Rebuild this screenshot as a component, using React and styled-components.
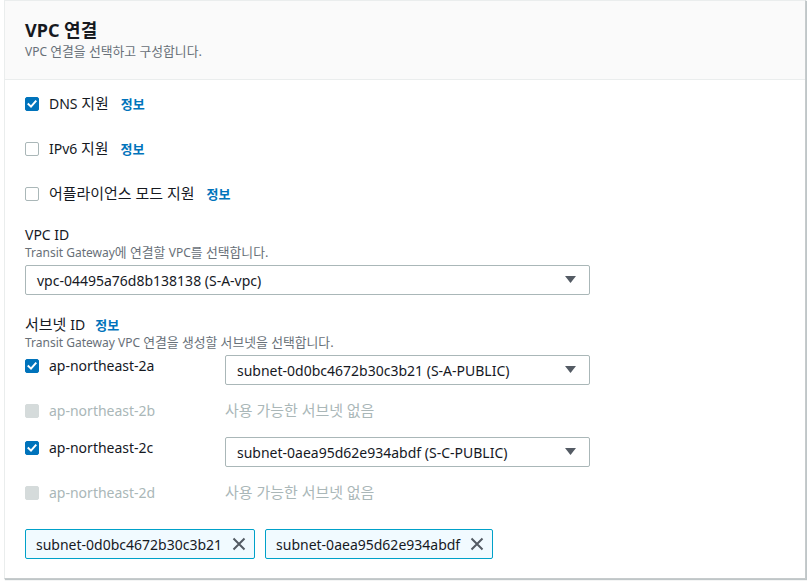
import React from "react";
import styled, { createGlobalStyle } from "styled-components";

const Global = createGlobalStyle`
  html, body { margin: 0; padding: 0; background: #ffffff; }
  body {
    font-family: "Noto Sans", "Noto Sans CJK KR", sans-serif;
    color: #16191f;
    font-size: 14px;
  }
  * { box-sizing: border-box; }
`;

const Page = styled.div`
  padding: 0 1px 2px 4px;
  width: 807px;
`;

const Card = styled.section`
  width: 802px;
  border: 1px solid #eaeded;
  border-right: 1px solid #c6cbcc;
  border-bottom: 1px solid #c6cbcc;
  box-shadow: 1px 1px 1px 0 rgba(0, 28, 36, 0.25);
  background: #fff;
`;

const Header = styled.header`
  background: #fafafa;
  border-bottom: 1px solid #eaeded;
  padding: 18px 20px 19px;
  display: flex;
  flex-direction: column;
`;

const Title = styled.h2`
  margin: 0;
  font-size: 18px;
  line-height: 22px;
  height: 22px;
  font-weight: 700;
  color: #16191f;
`;

const Subtitle = styled.div`
  margin-top: 3px;
  font-size: 12px;
  line-height: 16px;
  height: 16px;
  color: #687078;
`;

/* Hangul is set a touch larger, as the reference's Korean face runs wider */
const Ko = styled.span`
  font-size: 1.07em;
  line-height: 1;
`;

const Body = styled.div`
  padding: 13px 20px 19px;
  display: flex;
  flex-direction: column;
`;

const OptionList = styled.div`
  display: flex;
  flex-direction: column;
  gap: 23px;
`;

const CheckRow = styled.label`
  display: flex;
  align-items: center;
  height: 22px;
  gap: 10px;
  line-height: 22px;
  color: ${(p) => (p.$disabled ? "#aab7b8" : "#16191f")};
  font-size: 14px;
  white-space: nowrap;
`;

const Box = styled.span`
  width: 14px;
  height: 14px;
  flex: none;
  border-radius: 2px;
  display: inline-flex;
  align-items: center;
  justify-content: center;
  background: ${(p) => (p.$disabled ? "#d5dbdb" : p.$checked ? "#0073bb" : "#fff")};
  border: 1px solid
    ${(p) => (p.$disabled ? "#d5dbdb" : p.$checked ? "#0073bb" : "#aab7b8")};
`;

const Info = styled.a`
  margin-left: 2px;
  font-size: 13px;
  font-weight: 700;
  color: #0073bb;
  text-decoration: none;
`;

const Field = styled.div`
  margin-top: ${(p) => p.$top}px;
  display: flex;
  flex-direction: column;
`;

const FieldLabel = styled.div`
  font-size: 14px;
  line-height: 20px;
  height: 20px;
  color: #16191f;
  display: flex;
  align-items: center;
  gap: 8px;
`;

const Description = styled.div`
  font-size: 12px;
  line-height: 16px;
  height: 16px;
  color: #687078;
`;

const Select = styled.div`
  margin-top: ${(p) => p.$top || 0}px;
  width: ${(p) => p.$width}px;
  height: 30px;
  border: 1px solid #aab7b8;
  border-radius: 2px;
  display: flex;
  align-items: center;
  justify-content: space-between;
  padding: 0 13px 0 11px;
  font-size: 14px;
  color: #16191f;
  background: #fff;
`;

const SubnetList = styled.div`
  margin-top: 4px;
  display: flex;
  flex-direction: column;
  gap: 11px;
`;

const SubnetRow = styled.div`
  display: flex;
  align-items: flex-start;
  height: 30px;
`;

const AzCell = styled.div`
  width: 200px;
  flex: none;
  padding-top: ${(p) => (p.$disabled ? 4 : 0)}px;
`;

const Empty = styled.div`
  line-height: 30px;
  height: 30px;
  font-size: 14px;
  color: #aab7b8;
`;

const Tokens = styled.div`
  margin-top: 21px;
  display: flex;
  gap: 10px;
`;

const Token = styled.div`
  height: 30px;
  border: 1px solid #00a1c9;
  background: #f1faff;
  border-radius: 2px;
  display: flex;
  align-items: center;
  padding: 0 8px 0 10px;
  gap: 10px;
  font-size: 14px;
  color: #16191f;
`;

const ko = (text) =>
  text.split(/([\uAC00-\uD7A3][\uAC00-\uD7A3 .]*)/).map((part, i) =>
    /[\uAC00-\uD7A3]/.test(part) ? <Ko key={i}>{part}</Ko> : part
  );

const Check = () => (
  <svg width="10" height="10" viewBox="0 0 10 10">
    <polyline
      points="1.5,5.2 4,7.6 8.6,2.4"
      fill="none"
      stroke="#fff"
      strokeWidth="2"
      strokeLinecap="square"
    />
  </svg>
);

const Checkbox = ({ checked, disabled }) => (
  <Box $checked={checked} $disabled={disabled}>
    {checked && !disabled && <Check />}
  </Box>
);

const Caret = () => (
  <svg width="11" height="8" viewBox="0 0 11 8">
    <polygon points="0,0 11,0 5.5,7" fill="#545b64" />
  </svg>
);

const XIcon = () => (
  <svg width="14" height="14" viewBox="0 0 14 14">
    <path
      d="M1.5 1.5 L12.5 12.5 M12.5 1.5 L1.5 12.5"
      stroke="#545b64"
      strokeWidth="2"
      fill="none"
    />
  </svg>
);

const options = [
  { label: "DNS 지원", checked: true },
  { label: "IPv6 지원", checked: false },
  { label: "어플라이언스 모드 지원", checked: false },
];

const subnets = [
  { az: "ap-northeast-2a", value: "subnet-0d0bc4672b30c3b21 (S-A-PUBLIC)" },
  { az: "ap-northeast-2b", value: null },
  { az: "ap-northeast-2c", value: "subnet-0aea95d62e934abdf (S-C-PUBLIC)" },
  { az: "ap-northeast-2d", value: null },
];

const tokens = ["subnet-0d0bc4672b30c3b21", "subnet-0aea95d62e934abdf"];

export default function App() {
  return (
    <Page>
      <Global />
      <Card>
        <Header>
          <Title>VPC 연결</Title>
          <Subtitle>{ko("VPC 연결을 선택하고 구성합니다.")}</Subtitle>
        </Header>
        <Body>
          <OptionList>
            {options.map((o) => (
              <CheckRow key={o.label}>
                <Checkbox checked={o.checked} />
                <span>{ko(o.label)}</span>
                <Info>정보</Info>
              </CheckRow>
            ))}
          </OptionList>

          <Field $top={20}>
            <FieldLabel>VPC ID</FieldLabel>
            <Description>{ko("Transit Gateway에 연결할 VPC를 선택합니다.")}</Description>
            <Select $top={4} $width={565}>
              <span>vpc-04495a76d8b138138 (S-A-vpc)</span>
              <Caret />
            </Select>
          </Field>

          <Field $top={20}>
            <FieldLabel>
              <span>{ko("서브넷 ID")}</span>
              <Info>정보</Info>
            </FieldLabel>
            <Description>
              {ko("Transit Gateway VPC 연결을 생성할 서브넷을 선택합니다.")}
            </Description>
            <SubnetList>
              {subnets.map((s) => (
                <SubnetRow key={s.az}>
                  <AzCell $disabled={!s.value}>
                    <CheckRow $disabled={!s.value}>
                      <Checkbox checked={!!s.value} disabled={!s.value} />
                      <span>{s.az}</span>
                    </CheckRow>
                  </AzCell>
                  {s.value ? (
                    <Select $width={365}>
                      <span>{s.value}</span>
                      <Caret />
                    </Select>
                  ) : (
                    <Empty>{ko("사용 가능한 서브넷 없음")}</Empty>
                  )}
                </SubnetRow>
              ))}
            </SubnetList>
          </Field>

          <Tokens>
            {tokens.map((t) => (
              <Token key={t}>
                <span>{t}</span>
                <XIcon />
              </Token>
            ))}
          </Tokens>
        </Body>
      </Card>
    </Page>
  );
}
